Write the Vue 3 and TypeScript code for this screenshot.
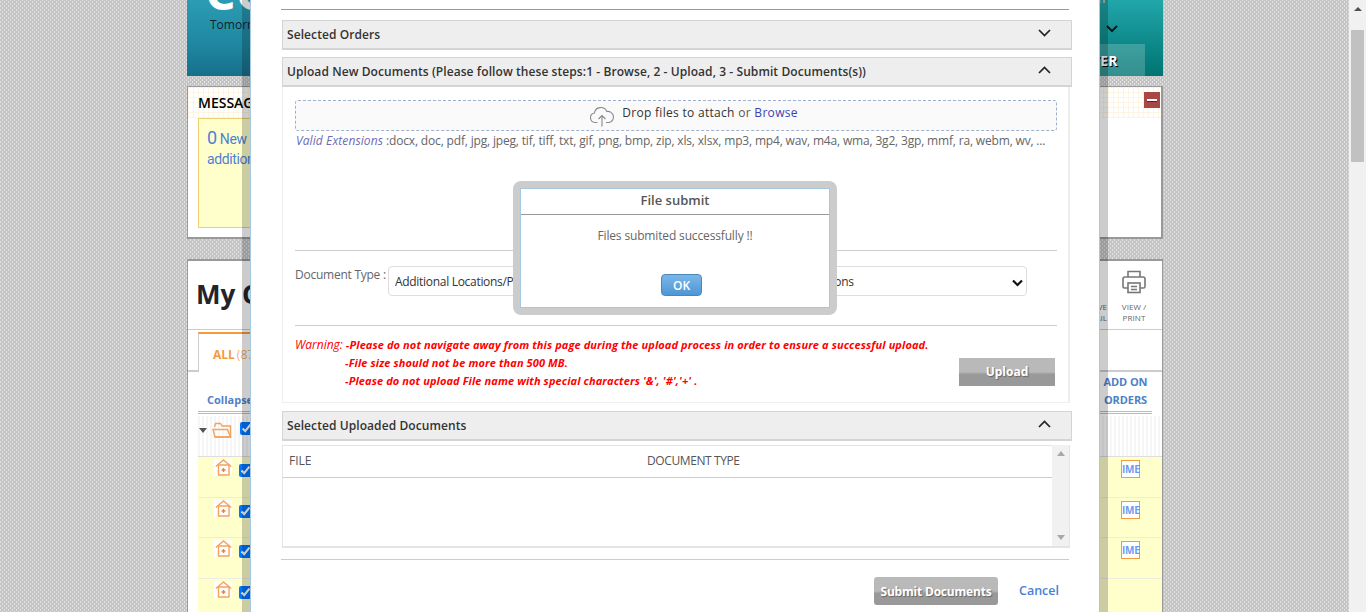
<script setup lang="ts">
const rows = [0, 1, 2, 3]
const extensions = 'docx, doc, pdf, jpg, jpeg, tif, tiff, txt, gif, png, bmp, zip, xls, xlsx, mp3, mp4, wav, m4a, wma, 3g2, 3gp, mmf, ra, webm, wv, ...'
</script>

<template>
  <div class="screen">
    <div class="page">
      <div class="column">
        <header class="banner">
          <div class="logo">CC</div>
          <div class="tagline">Tomorrow</div>
          <div class="banner-right">
            <span class="top-link">Admin</span>
            <svg class="banner-chev" width="12" height="8" viewBox="0 0 12 8"><path d="M1 1l5 5 5-5" fill="none" stroke="#0b1b1c" stroke-width="2" /></svg>
            <div class="banner-btn"><span>REGISTER</span></div>
          </div>
        </header>

        <section class="message">
          <div class="message-head">
            <span>MESSAGES</span>
            <span class="minus"><i></i></span>
          </div>
          <div class="message-box"><span class="zero">0</span> New Orders with<br />additional</div>
        </section>

        <section class="orders">
          <div class="orders-top">
            <h1>My Orders</h1>
            <div class="tools">
              <span class="tool-label">ARCHIVE<br />EMAIL</span>
              <div class="print">
                <svg width="26" height="26" viewBox="0 0 26 26" fill="none" stroke="#777" stroke-width="1.6">
                  <path d="M7 8V2.500h12V8" />
                  <path d="M7 19H3.500A1.500 1.500 0 0 1 2 17.500V10a2 2 0 0 1 2-2h18a2 2 0 0 1 2 2v7.500a1.500 1.500 0 0 1-1.500 1.500H19" />
                  <rect x="7" y="14" width="12" height="9.500" />
                  <path d="M10 17.500h6M10 20.500h6" />
                </svg>
                <span>VIEW /<br />PRINT</span>
              </div>
            </div>
          </div>
          <div class="tabs">
            <div class="tab"><b>ALL</b><span>(87)</span></div>
          </div>
          <div class="columns">
            <span class="collapse">Collapse All</span>
            <span class="addon">ADD ON<br />ORDERS</span>
          </div>
          <div class="group-row">
            <span class="caret"></span>
            <svg width="22" height="16" viewBox="0 0 22 16" fill="none" stroke="#f2a35e" stroke-width="1.400">
              <path d="M3 15h15.500V4H10L8.500 1.500h-5L2.500 5" />
              <path d="M1 7.500h14.500L18.500 15H3z" />
            </svg>
            <input type="checkbox" checked />
          </div>
          <div v-for="r in rows" :key="r" class="row">
            <span class="house">
              <svg width="17" height="17" viewBox="0 0 17 17" fill="none" stroke="#f4a25c" stroke-width="1.400">
                <path d="M.800 7.500L8.500 1l7.700 6.500" />
                <path d="M3.500 6v10h11" />
                <path d="M3.500 6h10.500v10" />
                <path d="M6.500 11h4M8.500 9v4" stroke="#f08030" />
              </svg>
            </span>
            <input type="checkbox" checked />
            <span v-if="r < 3" class="ime">IME</span>
          </div>
        </section>
      </div>
    </div>

    <div class="scrollbar">
      <span class="scroll-up"></span>
      <span class="thumb"></span>
    </div>

    <div class="modal">
      <div class="rule"></div>
      <div class="acc-head first">
        <span>Selected Orders</span>
        <svg width="13" height="8" viewBox="0 0 13 8"><path d="M1 1l5.500 5.500L12 1" fill="none" stroke="#222" stroke-width="1.700" /></svg>
      </div>
      <div class="acc-head">
        <span>Upload New Documents (Please follow these steps:1 - Browse, 2 - Upload, 3 - Submit Documents(s))</span>
        <svg width="13" height="8" viewBox="0 0 13 8"><path d="M1 7l5.500-5.500L12 7" fill="none" stroke="#222" stroke-width="1.700" /></svg>
      </div>
      <div class="upload-body">
        <div class="drop">
          <svg width="26" height="21" viewBox="0 0 26 21" fill="none" stroke="#8a8a8a" stroke-width="1.100">
            <path d="M8.500 16.500H6a4.800 4.800 0 0 1-.6-9.500A6.500 6.500 0 0 1 17.800 5.500a5.600 5.600 0 0 1 2.200 11h-3" />
            <path d="M13 20.500V9.500M9.500 13l3.500-3.500 3.500 3.500" />
          </svg>
          <span class="drop-text">Drop files to attach <em>or</em> <a>Browse</a></span>
        </div>
        <div class="valid"><i>Valid Extensions</i> <span>:{{ extensions }}</span></div>
        <div class="line first-line"></div>
        <div class="doc-type">
          <label>Document Type :</label>
          <div class="select-wrap">
            <select>
              <option>Additional Locations/Properties Under an Insurance Policy Including Legal Descriptions</option>
            </select>
            <svg class="select-chev" width="11" height="8" viewBox="0 0 11 8"><path d="M1 1.500l4.500 4.500L10 1.500" fill="none" stroke="#111" stroke-width="2.200" /></svg>
          </div>
        </div>
        <div class="line second-line"></div>
        <div class="warn-row">
          <div class="warnings">
            <p><span class="warn-label">Warning:</span> -Please do not navigate away from this page during the upload process in order to ensure a successful upload.</p>
            <p class="indent">-File size should not be more than 500 MB.</p>
            <p class="indent">-Please do not upload File name with special characters '&amp;', '#','+' .</p>
          </div>
          <button class="grey upload">Upload</button>
        </div>
      </div>
      <div class="acc-head third">
        <span>Selected Uploaded Documents</span>
        <svg width="13" height="8" viewBox="0 0 13 8"><path d="M1 7l5.500-5.500L12 7" fill="none" stroke="#222" stroke-width="1.700" /></svg>
      </div>
      <div class="table">
        <div class="table-main">
          <div class="table-head"><span class="col-file">FILE</span><span class="col-type">DOCUMENT TYPE</span></div>
        </div>
        <div class="table-scroll"><span class="tri up"></span><span class="tri down"></span></div>
      </div>
      <div class="rule bottom"></div>
      <div class="footer">
        <button class="grey submit">Submit Documents</button>
        <a class="cancel">Cancel</a>
      </div>
    </div>

    <div class="dialog">
      <div class="dialog-inner">
        <div class="dialog-title">File submit</div>
        <div class="dialog-msg">Files submited successfully !!</div>
        <button class="ok">OK</button>
      </div>
    </div>
  </div>
</template>

<style>
html, body { margin: 0; height: 100%; overflow: hidden; }
</style>

<style scoped>
* { box-sizing: border-box; }
.screen {
  position: relative;
  width: 1366px;
  height: 612px;
  overflow: hidden;
  display: flex;
  font-family: "Open Sans", "Liberation Sans", sans-serif;
}
.page {
  width: 1349px;
  height: 612px;
  padding-left: 187px;
  overflow: hidden;
  background-color: #e2e2e2;
  background-image:
    linear-gradient(45deg, #c4c4c4 0 12.5%, transparent 12.5% 37.5%, #c4c4c4 37.5% 62.5%, transparent 62.5% 87.5%, #c4c4c4 87.5%),
    linear-gradient(-45deg, #c4c4c4 0 12.5%, transparent 12.5% 37.5%, #c4c4c4 37.5% 62.5%, transparent 62.5% 87.5%, #c4c4c4 87.5%);
  background-size: 4px 4px;
}
.column { width: 976px; }

.banner {
  height: 76px;
  position: relative;
  display: flex;
  justify-content: flex-end;
  overflow: hidden;
  background:
    linear-gradient(100deg, transparent 8%, rgba(150,210,230,.45) 12%, transparent 18%),
    linear-gradient(180deg, #2b9cb3 0%, #1f86a0 60%, #176f8a 100%);
}
.logo {
  position: absolute;
  left: 18px;
  top: -36px;
  font: 700 48px "Open Sans", sans-serif;
  color: #fff;
  line-height: 56px;
}
.tagline {
  position: absolute;
  left: 23px;
  top: 16px;
  font-size: 12px;
  line-height: 17px;
  color: #12222c;
}
.banner-right {
  width: 200px;
  height: 76px;
  background: linear-gradient(180deg, #21a6aa 0%, #007472 100%);
  position: relative;
  display: flex;
  flex-direction: column;
  align-items: flex-end;
}
.top-link {
  position: absolute;
  left: 106px;
  top: -9px;
  font-size: 12px;
  line-height: 16px;
  color: #d8f0f0;
}
.banner-chev { margin: 25px 45px 0 0; }
.banner-btn {
  width: 128px;
  height: 32px;
  margin: 11px 18px 0 0;
  background: rgba(255,255,255,.2);
  display: flex;
  align-items: center;
  justify-content: center;
  font: 700 14px "Open Sans", sans-serif;
  color: #fff;
  text-shadow: 1px 1px 0 #000;
}
.banner-btn span { margin-left: 7px; letter-spacing: .2px; }

.message {
  margin-top: 10px;
  height: 153px;
  background: #fff;
  border: 1px solid #999;
  border-bottom-width: 2px;
  border-right-width: 2px;
  padding: 0 0 0 10px;
  position: relative;
}
.message-head {
  position: absolute;
  left: 0;
  right: 0;
  top: 0;
  height: 31px;
  padding: 7px 0 0 10px;
  font-size: 14px;
  line-height: 18px;
  font-weight: 600;
  color: #000;
  background-color: #fff;
  background-image:
    linear-gradient(#fdf5e2 1px, transparent 1px),
    linear-gradient(90deg, #fdf5e2 1px, transparent 1px);
  background-size: 5px 5px;
}
.minus {
  position: absolute;
  right: 1px;
  top: 5px;
  width: 16px;
  height: 16px;
  background: #a94744;
  display: flex;
  align-items: center;
  justify-content: center;
}
.minus i {
  width: 10px;
  height: 2px;
  background: #fff;
  box-shadow: 0 1px 0 #5a2020;
}
.message-box {
  position: absolute;
  left: 10px;
  width: 850px;
  top: 31px;
  height: 110px;
  background: #ffffcc;
  border: 1px solid #efd070;
  padding: 9px 8px;
  font: 14px/20px Roboto, sans-serif;
  color: #4f80d8;
  letter-spacing: -.4px;
}
.zero { font-size: 18px; }

.orders {
  margin-top: 20px;
  height: 353px;
  background: #fff;
  border: 1px solid #999;
  border-top-width: 2px;
  border-bottom: 0;
  overflow: hidden;
}
.orders-top {
  height: 69px;
  border-bottom: 1px solid #ccc;
  display: flex;
  justify-content: space-between;
  padding: 8px 11px 0 8px;
}
h1 {
  margin: 8px 0 0;
  font-size: 26px;
  line-height: 34px;
  font-weight: 700;
  color: #23232b;
}
.tools { display: flex; align-items: flex-start; }
.tool-label {
  margin: 32px 10px 0 0;
  font-size: 8px;
  line-height: 11px;
  color: #666;
  text-align: right;
}
.print {
  display: flex;
  flex-direction: column;
  align-items: center;
  width: 34px;
  font: 8px/11px "Open Sans", sans-serif;
  color: #666;
  text-align: center;
}
.print span { margin-top: 6px; letter-spacing: .1px; }
.tabs {
  height: 42px;
  border-bottom: 2px solid #ccc;
  padding: 2px 0 0 10px;
}
.tab {
  width: 300px;
  height: 40px;
  margin-bottom: -2px;
  background: #fff;
  border-top: 2px solid #f59a3a;
  border-left: 1px solid #ccc;
  padding: 12px 0 0 14px;
  font-size: 12px;
  line-height: 17px;
  color: #f7b067;
}
.tab b { color: #f59a3a; }
.tab span { margin-left: 2px; }
.columns {
  height: 42px;
  margin: 0 10px;
  padding: 0 0 0 9px;
  border-bottom: 3px double #bbb;
  display: flex;
  justify-content: space-between;
  font-size: 11px;
  font-weight: 700;
  color: #4f80c8;
}
.collapse { margin-top: 20px; line-height: 16px; }
.addon {
  margin: 1px 3px 0 0;
  line-height: 18px;
  text-align: center;
  width: 47px;
  letter-spacing: -.1px;
}
.group-row {
  height: 41px;
  margin: 2px 0 0 10px;
  display: flex;
  align-items: flex-start;
  border-bottom: 1px solid #ddd;
  background: repeating-linear-gradient(90deg, #f6f6f6 0 2px, #fff 2px 4px);
  position: relative;
}
.caret {
  margin: 12px 0 0 1px;
  width: 0;
  height: 0;
  border: 4px solid transparent;
  border-top: 5px solid #555;
  border-bottom: 0;
}
.group-row svg { margin: 6px 0 0 5px; }
.group-row input { margin: 6px 0 0 6px; }
input { width: 13px; height: 13px; flex: none; }
.row {
  height: 40.500px;
  margin-left: 10px;
  background: #ffffcc;
  border-bottom: 1px solid #eeeee0;
  display: flex;
  align-items: flex-start;
  position: relative;
}
.row input { margin: 7px 0 0 7px; }
.house {
  width: 18px;
  height: 17px;
  margin: 2px 0 0 16px;
  background: #fff;
  display: flex;
  align-items: center;
  justify-content: center;
}
.ime {
  margin: 3px 0 0 869px;
  width: 19px;
  height: 18px;
  background: #fff;
  border: 1px solid #f59a3a;
  font-size: 10px;
  font-weight: 700;
  line-height: 16px;
  text-align: center;
  color: #6c9cf0;
  letter-spacing: -.2px;
}

.scrollbar {
  width: 17px;
  height: 612px;
  background: #f1f1f1;
  display: flex;
  flex-direction: column;
  align-items: center;
}
.scroll-up {
  margin-top: 7px;
  width: 0;
  height: 0;
  border: 4px solid transparent;
  border-bottom: 4px solid #505050;
  border-top: 0;
}
.thumb {
  margin-top: 19px;
  width: 13px;
  height: 132px;
  background: #c1c1c1;
}

.modal {
  position: absolute;
  left: 250px;
  top: 0;
  width: 850px;
  height: 640px;
  background: #fff;
  border-left: 1px solid #a6c9e2;
  border-right: 1px solid #a6c9e2;
  box-shadow: 0 0 0 8px rgba(0,0,0,.2);
  padding-left: 30px;
}
.rule {
  margin-top: 9px;
  width: 788px;
  height: 1px;
  background: #999;
}
.rule.bottom { margin-top: 11px; background: #ccc; }
.acc-head {
  margin-top: 7px;
  width: 790px;
  height: 30px;
  margin-left: 1px;
  background: #eee;
  border: 1px solid #d4d4d4;
  border-bottom-width: 2px;
  padding: 0 20px 0 4px;
  display: flex;
  justify-content: space-between;
  align-items: center;
  font-size: 12px;
  font-weight: 600;
  color: #333;
  letter-spacing: .08px;
  position: relative;
}
.acc-head svg { margin-top: -4px; }
.acc-head.first { margin-top: 10px; }
.acc-head.third { margin-top: 8px; }
.upload-body {
  margin-left: 1px;
  width: 788px;
  height: 316px;
  border: 1px solid #eee;
  border-top: 0;
  border-right-width: 2px;
  padding: 13px 12px 0;
}
.drop {
  height: 31px;
  width: 762px;
  background: #fafafa;
  border: 1px dashed #9fb0cc;
  border-radius: 3px;
  display: flex;
  justify-content: center;
  padding-left: 35px;
  gap: 7px;
  color: #333;
  font-size: 12px;
}
.drop svg { margin-top: 5px; }
.drop-text { line-height: 24px; letter-spacing: .3px; }
.drop em { font-style: normal; color: #555; }
.drop a { color: #3f3fb0; }
.valid {
  width: 762px;
  margin-top: 1px;
  padding-left: 1px;
  font-size: 12px;
  line-height: 18px;
  color: #666;
  white-space: nowrap;
  overflow: hidden;
}
.valid i { color: #6b6bb8; letter-spacing: .1px; }
.valid span { letter-spacing: -.17px; }
.line { width: 762px; height: 1px; background: #ccc; }
.first-line { margin-top: 100px; }
.doc-type {
  margin-top: 15px;
  height: 30px;
  display: flex;
  align-items: flex-start;
  font-size: 12px;
  color: #666;
}
.doc-type label { width: 93px; line-height: 18px; flex: none; white-space: nowrap; letter-spacing: -.25px; }
.select-wrap { position: relative; width: 639px; height: 30px; flex: none; }
select {
  appearance: none;
  width: 639px;
  height: 30px;
  background: #fff;
  border: 1px solid #ddd;
  border-radius: 4px;
  padding-left: 6px;
  font: 12px "Open Sans", sans-serif;
  letter-spacing: -.3px;
  color: #333;
}
.select-chev { position: absolute; right: 4px; top: 13px; pointer-events: none; }
.second-line { margin-top: 29px; }
.warn-row {
  display: flex;
  justify-content: space-between;
  align-items: flex-start;
  margin-top: 10px;
  width: 760px;
}
.warnings p {
  margin: 0;
  font-size: 11px;
  line-height: 18px;
  font-weight: 700;
  font-style: italic;
  letter-spacing: .1px;
  color: #f00;
}
.warnings { width: 640px; white-space: nowrap; }
.warn-label { font-size: 12px; font-weight: 400; letter-spacing: 0; }
.indent { padding-left: 50px; }
button { font-family: "Open Sans", sans-serif; cursor: default; }
.grey {
  border: 0;
  background: linear-gradient(180deg, #b9b9b9 0 50%, #999 58% 100%);
  color: #fff;
  font-weight: 700;
  font-size: 12px;
  text-shadow: 1px 1px 1px #666;
}
.upload { width: 96px; height: 28px; margin-top: 22px; padding: 0 0 2px; }
.table {
  margin-top: 4px;
  margin-left: 1px;
  width: 788px;
  height: 103px;
  border: 1px solid #e4e4e4;
  border-width: 0 1px 2px 1px;
  display: flex;
}
.table-main { flex: 1; }
.table-head {
  height: 33px;
  border-top: 1px solid #e4e4e4;
  border-bottom: 1px solid #ccc;
  display: flex;
  align-items: center;
  padding-bottom: 2px;
  font-size: 12px;
  color: #555;
}
.col-file { width: 364px; padding-left: 6px; }
.col-type { letter-spacing: -.4px; }
.table-scroll {
  width: 17px;
  background: #f1f1f1;
  display: flex;
  flex-direction: column;
  align-items: center;
  justify-content: space-between;
  padding: 6px 0;
}
.tri { width: 0; height: 0; border: 4px solid transparent; }
.tri.up { border-top: 0; border-bottom: 5px solid #a8a8a8; }
.tri.down { border-bottom: 0; border-top: 5px solid #a8a8a8; }
.footer {
  margin-top: 17px;
  width: 788px;
  display: flex;
  justify-content: flex-end;
  align-items: flex-start;
}
.submit { width: 124px; height: 28px; border-radius: 3px; padding: 0; letter-spacing: -.2px; }
.cancel {
  margin: 5px 10px 0 21px;
  font-size: 12.500px;
  line-height: 18px;
  font-weight: 600;
  color: #4a7fd0;
}
.dialog {
  position: absolute;
  left: 513px;
  top: 181px;
  width: 324px;
  height: 134px;
  border: 7px solid #ccc;
  border-radius: 8px;
  background: #ccc;
}
.dialog-inner {
  height: 100%;
  background: #fff;
  border: 1px solid #a6c9e2;
  display: flex;
  flex-direction: column;
  align-items: center;
}
.dialog-title {
  width: 100%;
  height: 26px;
  border-bottom: 1px solid #999;
  text-align: center;
  font-size: 13px;
  line-height: 22px;
  font-weight: 600;
  color: #555;
}
.dialog-msg {
  margin-top: 12px;
  font-size: 12px;
  line-height: 17px;
  letter-spacing: -.15px;
  color: #666;
}
.ok {
  margin: 30px 0 0 13px;
  width: 41px;
  height: 22px;
  padding: 0;
  border: 1px solid #4a86b8;
  border-radius: 4px;
  background: linear-gradient(180deg, #79b7e7, #4f96d6);
  color: #fff;
  font-size: 12px;
  font-weight: 600;
}
</style>
